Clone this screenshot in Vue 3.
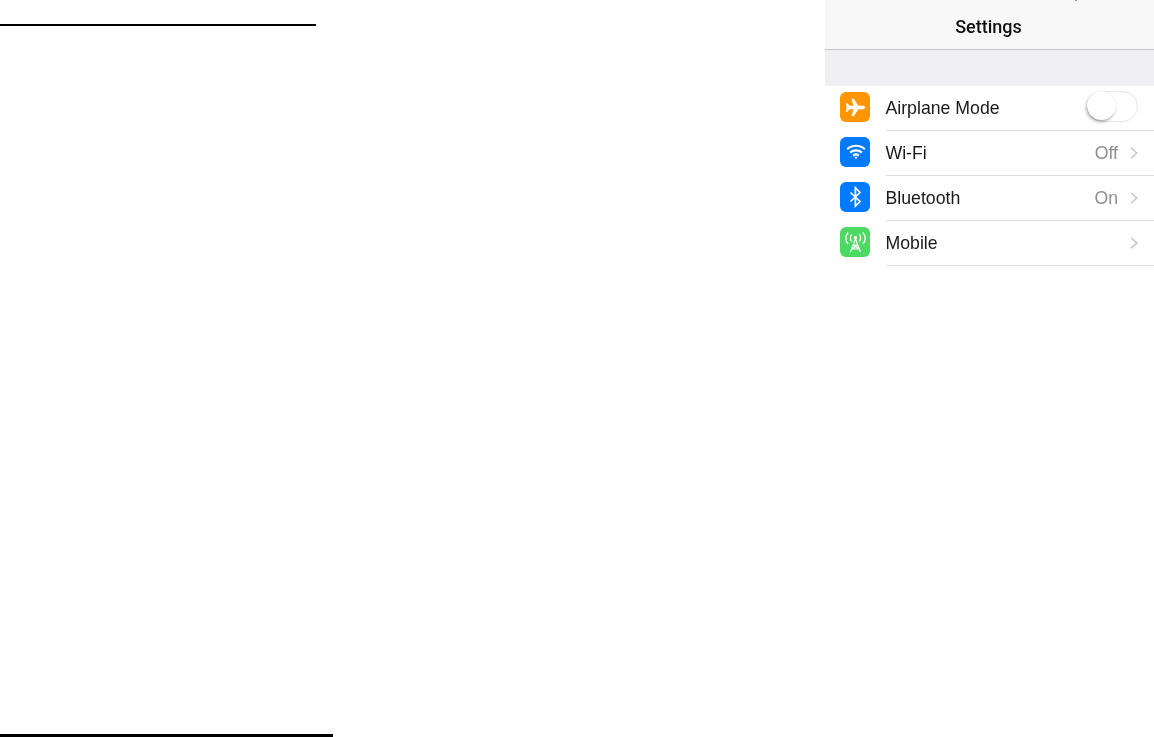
<template>
  <div class="page">
    <div class="rules">
      <div class="rule rule-top"></div>
      <div class="rule rule-bottom"></div>
    </div>
    <div class="phone">
      <header class="nav"><span class="status-tip"></span>Settings</header>
      <div class="group-gap"></div>
      <ul class="list">
        <li v-for="row in rows" :key="row.label" class="row">
          <span class="icon" :class="row.icon">
            <svg v-if="row.icon === 'plane'" viewBox="0 0 30 30" width="30" height="30">
              <path fill="#fff" stroke="#fff" stroke-width="0.5" d="M25 15.5c0-1-1.2-1.6-2.4-1.6h-4.4L13.8 7h-2l2 6.9H9.4L7.6 11.6H6l1 3.9-1 3.9h1.6l1.8-2.3h4.4l-2 6.9h2l4.4-6.9h4.4c1.2 0 2.4-.6 2.4-1.5z" />
            </svg>
            <svg v-else-if="row.icon === 'wifi'" viewBox="0 0 30 30" width="30" height="30" fill="none" stroke="#fff" stroke-width="2.2">
              <path d="M7.2 12.2c5-4.6 12.6-4.6 17.6 0" />
              <path d="M10.2 15.6c3.2-2.9 8.4-2.9 11.6 0" />
              <path d="M13.2 18.6c1.6-1.3 4-1.3 5.6 0" />
              <circle cx="16" cy="20.6" r="1.2" fill="#fff" stroke="none" />
            </svg>
            <svg v-else-if="row.icon === 'bluetooth'" viewBox="0 0 30 30" width="30" height="30" fill="none" stroke="#fff" stroke-width="1.7">
              <path d="M10.5 10.5l9.5 9-4.6 4.6V5.9l4.6 4.6-9.5 9" />
            </svg>
            <svg v-else viewBox="0 0 30 30" width="30" height="30" fill="none" stroke="#fff" stroke-width="1.2">
              <path d="M15.5 12L10.5 25M15.5 12L20.5 25M13.4 18h4.2M12 22h7M13.4 18l5.6 4M17.6 18l-5.6 4" />
              <circle cx="15.5" cy="10.8" r="1.7" fill="#fff" stroke="none" />
              <path d="M11.8 7.4c-1.8 2-1.8 5 0 7M19.2 7.4c1.8 2 1.8 5 0 7" stroke-width="1.4" />
              <path d="M8.2 5.4c-3.2 3.4-3.2 8.6 0 11.4M22.8 5.4c3.2 3.4 3.2 8.6 0 11.4" stroke-width="1.4" />
            </svg>
          </span>
          <div class="row-body">
            <span class="label">{{ row.label }}</span>
            <span v-if="row.value" class="value">{{ row.value }}</span>
            <div v-if="row.toggle" class="toggle"><span class="knob"></span></div>
            <svg v-else class="chevron" viewBox="0 0 8 12" width="8" height="12" fill="none" stroke="#c4c4c8" stroke-width="1.5">
              <path d="M1 .8L6.8 6 1 11.2" />
            </svg>
          </div>
        </li>
      </ul>
    </div>
  </div>
</template>

<script setup>
const rows = [
  { label: "Airplane Mode", icon: "plane", toggle: true },
  { label: "Wi-Fi", icon: "wifi", value: "Off" },
  { label: "Bluetooth", icon: "bluetooth", value: "On" },
  { label: "Mobile", icon: "mobile" },
];
</script>

<style>
html,
body {
  margin: 0;
  background: #fff;
}
</style>

<style scoped>
.page {
  display: flex;
  justify-content: space-between;
  height: 737px;
  overflow: hidden;
  background: #fff;
  font-family: "Liberation Sans", Arial, sans-serif;
}

.rules {
  display: flex;
  flex-direction: column;
  justify-content: space-between;
  padding-top: 24px;
}

.rule {
  background: #000;
}

.rule-top {
  width: 316px;
  height: 2px;
}

.rule-bottom {
  width: 333px;
  height: 3px;
}

.phone {
  width: 329px;
  filter: blur(0.5px);
}

.nav {
  position: relative;
  height: 49px;
  border-bottom: 1px solid #c8c8cc;
  background: #f8f8f8;
  color: #111;
  font-family: Roboto, "Liberation Sans", sans-serif;
  font-size: 18px;
  font-weight: 500;
  line-height: 53px;
  text-align: center;
  padding-right: 2px;
}

.status-tip {
  position: absolute;
  top: 0;
  left: 250px;
  width: 2px;
  height: 1px;
  background: #999;
}

.group-gap {
  height: 36px;
  background: #efeff4;
}

.list {
  margin: 0;
  padding: 0;
  list-style: none;
}

.row {
  display: flex;
  align-items: center;
  height: 45px;
  padding-left: 15px;
  background: #fff;
}

.icon {
  flex: none;
  width: 30px;
  height: 30px;
  margin-top: -3px;
  margin-right: 15.5px;
  border-radius: 6px;
}

.icon svg {
  display: block;
}

.plane {
  background: #ff9500;
}

.wifi,
.bluetooth {
  background: #007aff;
}

.mobile {
  background: #4cd964;
}

.row-body {
  flex: 1;
  display: flex;
  align-items: center;
  height: 100%;
  box-sizing: border-box;
  padding-right: 16px;
  border-bottom: 1px solid #dcdcdf;
}

.label {
  flex: 1;
  color: #1a1a1a;
  font-size: 17.7px;
}

.value {
  margin-right: 12px;
  color: #8e8e93;
  font-size: 17.7px;
}

.toggle {
  position: relative;
  width: 51px;
  height: 31px;
  box-sizing: border-box;
  margin-top: -3px;
  border: 1.5px solid #e5e5ea;
  border-radius: 16px;
  background: #fff;
}

.knob {
  position: absolute;
  top: -1px;
  left: -1.5px;
  width: 29px;
  height: 29px;
  border-radius: 50%;
  background: #fff;
  box-shadow: -1px 2px 3px rgba(0, 0, 0, 0.3), 0 0 1px rgba(0, 0, 0, 0.15);
}
</style>
